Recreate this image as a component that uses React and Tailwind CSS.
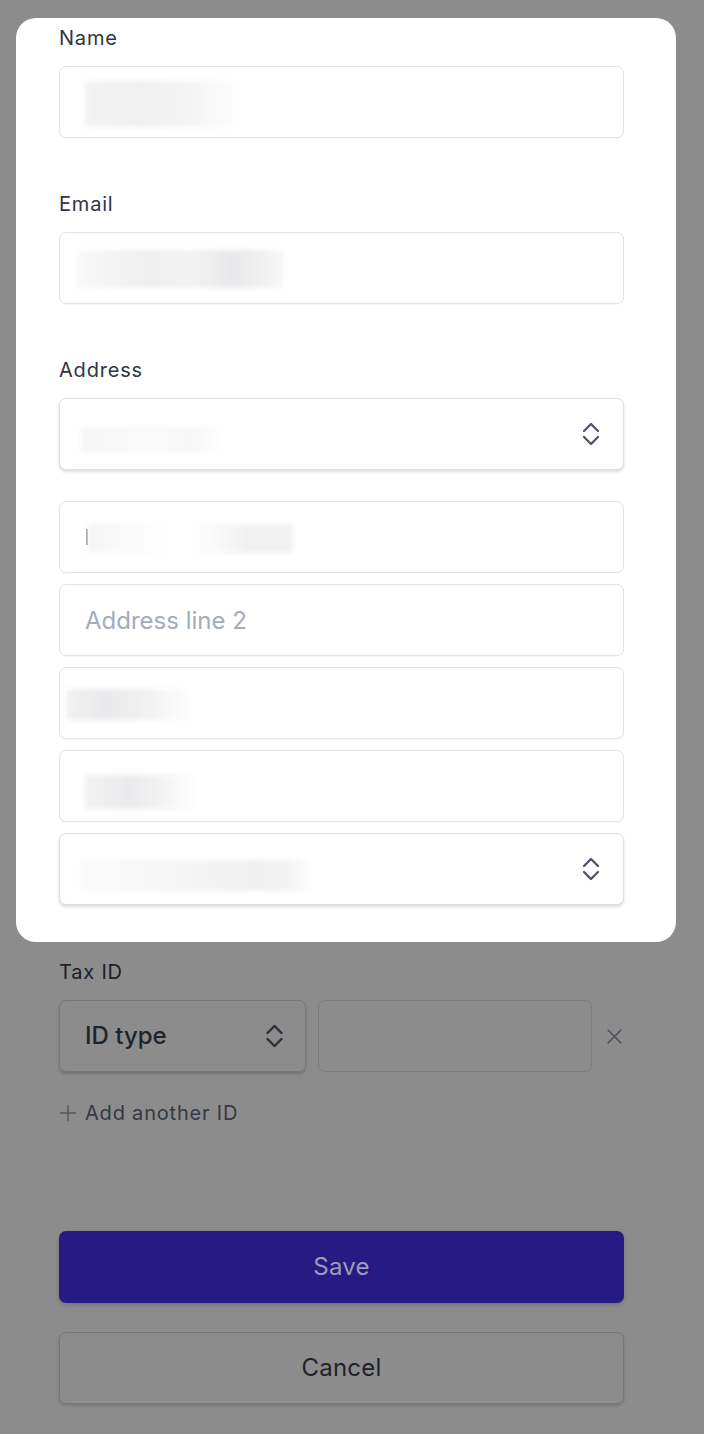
import React from "react";

const font = { fontFamily: "Inter, 'Noto Sans', sans-serif" };

function Chevrons({ className = "" }) {
  return (
    <svg viewBox="0 0 18 26" className={className} fill="none" stroke="currentColor" strokeWidth="2.4" strokeLinecap="round" strokeLinejoin="round">
      <polyline points="2,10 9,3 16,10" />
      <polyline points="2,16 9,23 16,16" />
    </svg>
  );
}

// blurred-out personal data, like in the reference
function Smudge({ className }) {
  return <div className={"shrink-0 blur-[2px] " + className} />;
}

function Label({ children, className = "" }) {
  return (
    <label className={"block text-[20px] leading-7 font-normal tracking-[0.04em] text-[#2f3447] mb-[14px] " + className}>
      {children}
    </label>
  );
}

function Box({ children, select, className = "" }) {
  return (
    <div
      className={
        "flex h-[72px] items-center rounded-[7px] border bg-white " +
        (select
          ? "border-[#dcdce3] shadow-[0_2px_3px_rgba(60,66,87,0.18)] "
          : "border-[#e3e3e8] shadow-[0_1px_1px_rgba(0,0,0,0.03)] ") +
        className
      }
    >
      {children}
    </div>
  );
}

export default function App() {
  return (
    <div className="min-h-screen bg-[#8c8c8c] pt-[18px]" style={font}>
      {/* sheet */}
      <div className="ml-4 mr-[28px] rounded-[20px] bg-white pl-[43px] pr-[52px] pt-[6px] pb-[37px]">
        <Label>Name</Label>
        <Box>
          <Smudge className="ml-[25px] mt-[3px] h-[46px] w-[159px] bg-[linear-gradient(90deg,#f3f3f3,#f0f0f1_35%,#f4f4f4_65%,#ffffff)]" />
        </Box>

        <Label className="mt-[52px]">Email</Label>
        <Box>
          <Smudge className="ml-[18px] mt-[2px] h-[38px] w-[205px] bg-[linear-gradient(90deg,#f8f8f9,#efeff0_35%,#f3f3f4_55%,#e8e8ea_75%,#f7f7f8)]" />
        </Box>

        <Label className="mt-[52px]">Address</Label>
        <Box select className="justify-between pr-[23px]">
          <Smudge className="ml-[21px] mt-[10px] h-[25px] w-[142px] bg-[linear-gradient(90deg,#f6f6f6,#fafafa_50%,#f7f7f7_80%,#ffffff)]" />
          <Chevrons className="h-[26px] w-[18px] text-[#4f566b]" />
        </Box>

        <div className="mt-[31px] flex flex-col gap-[11px]">
          <Box>
            <span className="ml-[26px] h-[16px] w-[2px] bg-[#9a9a9a] blur-[0.5px]" />
            <Smudge className="mt-[2px] h-[29px] w-[205px] bg-[linear-gradient(90deg,#f5f5f5,#ffffff_40%,#ffffff_50%,#f0f0f0_80%,#f1f1f1)]" />
          </Box>
          <Box>
            <input
              placeholder="Address line 2"
              className="h-full w-full bg-transparent px-[25px] text-[24px] text-[#3c4257] outline-none placeholder:text-[#a3acb9]"
            />
          </Box>
          <Box>
            <Smudge className="ml-[7px] mt-[3px] h-[31px] w-[127px] bg-[linear-gradient(90deg,#f1f1f2,#e9e9eb_30%,#f2f2f3_65%,#ffffff)]" />
          </Box>
          <Box>
            <Smudge className="ml-[24px] mt-[12px] h-[34px] w-[113px] bg-[linear-gradient(90deg,#f3f3f4,#eaeaec_40%,#f5f5f6_75%,#ffffff)]" />
          </Box>
          <Box select className="justify-between pr-[23px]">
            <Smudge className="ml-[21px] mt-[12px] h-[31px] w-[231px] bg-[linear-gradient(90deg,#fbfbfb,#f6f6f6_40%,#efeff0_75%,#f3f3f4_90%,#ffffff)]" />
            <Chevrons className="h-[26px] w-[18px] text-[#4f566b]" />
          </Box>
        </div>
      </div>

      {/* dimmed page behind the sheet */}
      <div className="pl-[59px] pr-[80px] pt-4 pb-8">
        <div className="text-[20px] leading-7 tracking-[0.04em] text-[#1d2029] mb-[14px]">Tax ID</div>
        <div className="flex h-[72px] items-center">
          <div className="flex h-full w-[247px] items-center justify-between rounded-[7px] border border-[#777] pl-[25px] pr-[21px] shadow-[0_2px_3px_rgba(0,0,0,0.18)]">
            <span className="text-[24px] font-medium text-[#20232c]">ID type</span>
            <Chevrons className="h-[26px] w-[19px] text-[#2c303a]" />
          </div>
          <div className="ml-[12px] h-full w-[274px] rounded-[7px] border border-[#7d7d7d]" />
          <svg viewBox="0 0 16 16" className="ml-[14px] h-[17px] w-[17px] text-[#50545e]" fill="none" stroke="currentColor" strokeWidth="1.4" strokeLinecap="round">
            <path d="M2 2l12 12M14 2L2 14" />
          </svg>
        </div>

        <div className="mt-[27px] flex items-center text-[#353843]">
          <svg viewBox="0 0 18 18" className="h-[18px] w-[18px] text-[#50545e]" fill="none" stroke="currentColor" strokeWidth="1.4">
            <path d="M9 1v16M1 9h16" />
          </svg>
          <span className="ml-[8px] text-[20px] leading-7 tracking-[0.04em]">Add another ID</span>
        </div>

        <button className="mt-[104px] flex h-[72px] w-full items-center justify-center rounded-[7px] bg-[#271a85] text-[24px] tracking-[0.01em] text-[#9e9cb2] shadow-[0_2px_4px_rgba(0,0,0,0.18)]">
          Save
        </button>
        <button className="mt-[29px] flex h-[72px] w-full items-center justify-center rounded-[7px] border border-[#767676] text-[24px] tracking-[0.01em] text-[#1f222b] shadow-[0_2px_3px_rgba(0,0,0,0.15)]">
          Cancel
        </button>
      </div>
    </div>
  );
}
